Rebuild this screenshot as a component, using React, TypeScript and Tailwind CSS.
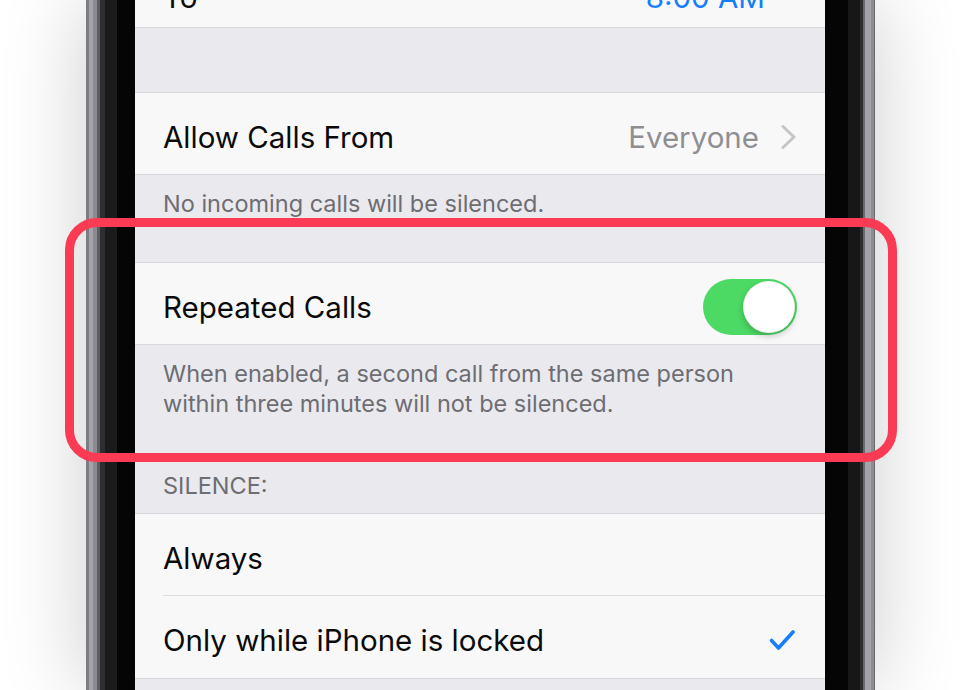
import type { ReactNode } from 'react';

// Settings → Do Not Disturb, shown inside a phone bezel with a callout ring.

const label = "text-[29.5px] leading-[36px] text-[#0a0a0a]";
const note = "text-[23.5px] leading-[30px] text-[#6d6d72]";

function Chevron() {
  return (
    <svg width="16" height="24" viewBox="0 0 16 24" className="ml-[22px]">
      <polyline points="2,1.5 13,12 2,22.5" fill="none" stroke="#c5c5c9" strokeWidth="3" strokeLinecap="round" strokeLinejoin="round" />
    </svg>
  );
}

function Check() {
  return (
    <svg width="26" height="22" viewBox="0 0 26 22">
      <polyline points="2.5,11.5 9.5,19 24,3" fill="none" stroke="#147efb" strokeWidth="3.6" strokeLinecap="round" strokeLinejoin="round" />
    </svg>
  );
}

function Toggle() {
  return (
    <div className="flex h-[56px] w-[94px] items-center justify-end rounded-full bg-[#4cd964] pr-[2px]">
      <div className="h-[52px] w-[52px] rounded-full border border-black/5 bg-white shadow-[0_3px_6px_rgba(0,0,0,0.22)]" />
    </div>
  );
}

function Row({
  children,
  right,
  first,
  last,
  pr = 'pr-[28px]',
}: {
  children: ReactNode;
  right?: ReactNode;
  first?: boolean;
  last?: boolean;
  pr?: string;
}) {
  return (
    <div
      className={`flex h-[83px] bg-[#f8f8f8] ${first ? 'border-t border-[#d8d8dc]' : ''} ${last ? 'border-b border-[#d8d8dc]' : ''}`}
    >
      <div
        className={`ml-[28px] flex flex-1 items-center justify-between pt-[6px] ${pr} ${last ? '' : 'border-b border-[#dcdce0]'}`}
      >
        <span className={label}>{children}</span>
        {right}
      </div>
    </div>
  );
}

function Screen() {
  return (
    <div className="flex h-full w-[690px] flex-col overflow-hidden bg-[#e9e9ee]">
      <div className="-mt-[47px] flex h-[75px] shrink-0 items-center justify-between border-b border-[#d8d8dc] bg-[#f8f8f8] pl-[28px] pr-[60px] pt-[13px]">
        <span className={label}>To</span>
        <span className={`${label} text-[#147efb]`}>8:00 AM</span>
      </div>

      <div className="h-[64px] shrink-0" />

      <Row
        first
        last
        right={
          <div className="flex items-center">
            <span className={`${label} text-[#8e8e93]`}>Everyone</span>
            <Chevron />
          </div>
        }
      >
        Allow Calls From
      </Row>
      <div className={`h-[87px] shrink-0 pl-[28px] pt-[14px] ${note}`}>No incoming calls will be silenced.</div>

      <Row first last right={<Toggle />}>
        Repeated Calls
      </Row>
      <div className={`h-[100px] shrink-0 pl-[28px] pr-[56px] pt-[14px] ${note}`}>
        When enabled, a second call from the same person within three minutes will not be silenced.
      </div>

      <div className={`flex h-[68px] shrink-0 items-end pb-[12px] pl-[28px] ${note}`}>SILENCE:</div>
      <Row first>Always</Row>
      <Row last pr="pr-[30px]" right={<Check />}>
        Only while iPhone is locked
      </Row>
    </div>
  );
}

export default function App() {
  return (
    <div className="relative h-[690px] w-[960px] overflow-hidden bg-white font-['Inter',sans-serif]">
      <div className="ml-[86px] flex h-full w-[789px] shadow-[0_0_80px_rgba(0,0,0,0.2)]">
        {/* left rim and bezel */}
        <div className="w-[3px] bg-[#7c7c82]" />
        <div className="w-[4px] bg-[#a4a4aa]" />
        <div className="w-[4px] bg-[#8a8a90]" />
        <div className="w-[3px] bg-[#5e5e62]" />
        <div className="w-[5px] bg-[#2e2e30]" />
        <div className="w-[12px] bg-[#1b1b1b]" />
        <div className="w-[18px] bg-[#050505]" />

        <Screen />

        {/* right bezel and rim */}
        <div className="w-[23px] bg-[#050505]" />
        <div className="w-[12px] bg-[#171717]" />
        <div className="w-[3px] bg-[#2f2f31]" />
        <div className="w-[2px] bg-[#6a6a6e]" />
        <div className="w-[6px] bg-[#a3a3a8]" />
        <div className="w-[3px] bg-[#8c8c91]" />
        <div className="w-[1px] bg-[#6a6a6e]" />
      </div>

      <div className="pointer-events-none absolute left-[65px] top-[218px] h-[244px] w-[832px] rounded-[32px] border-[9px] border-[#fb3a53]" />
    </div>
  );
}
